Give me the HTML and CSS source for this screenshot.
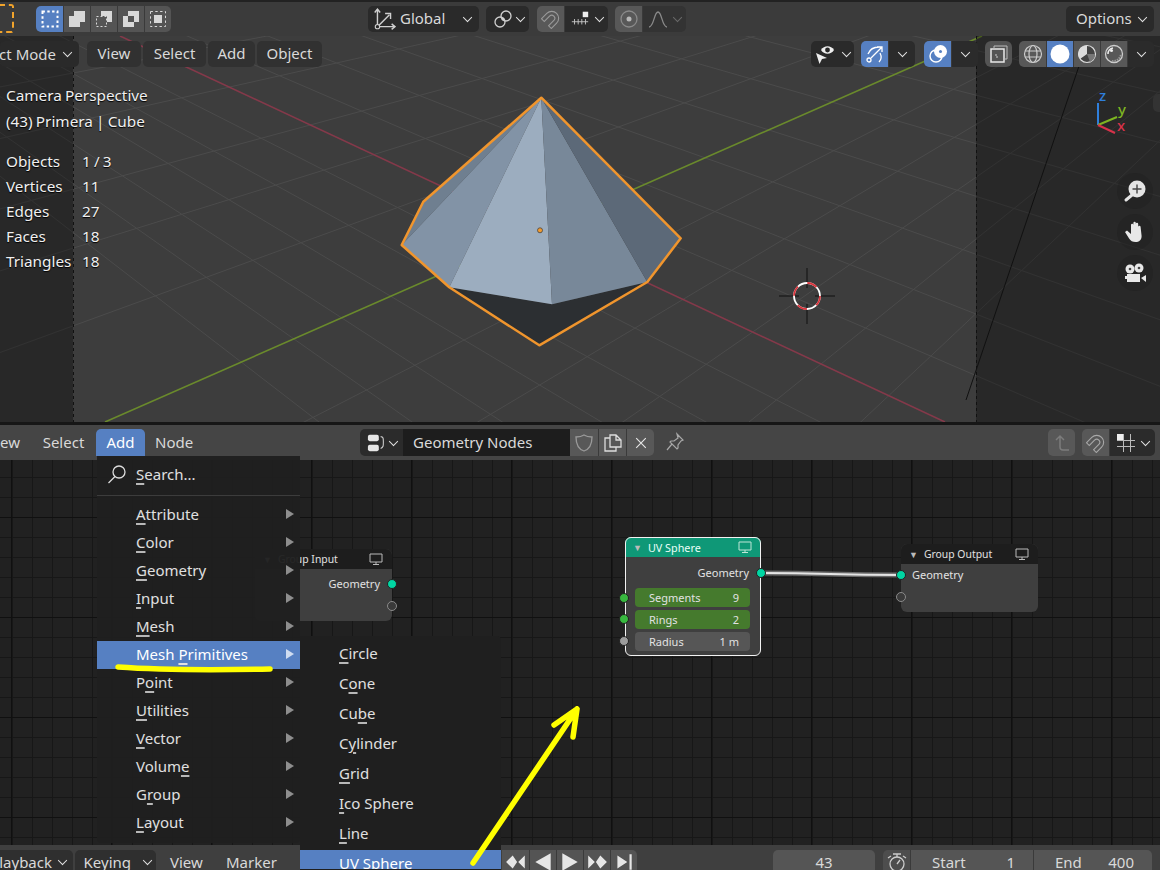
FILE: index.html
```html
<!DOCTYPE html>
<html lang="en">
<head>
<meta charset="utf-8">
<title>Blender Geometry Nodes</title>
<link rel="stylesheet" href="styles.css">
</head>
<body>
<div class="app">

  <header class="topbar">
    <div class="tool-icon"></div>
    <div class="btn-group modes">
      <div class="cell active"><svg viewBox="0 0 20 20" class="ic"><rect x="2.500" y="2.500" width="15" height="15" fill="none" stroke="#fff" stroke-width="2" stroke-dasharray="2.400 2.400"/></svg></div>
      <div class="cell"><svg viewBox="0 0 20 20" class="ic"><path d="M7 2h11v11h-5v5H2V7h5z" fill="#d8d8d8"/></svg></div>
      <div class="cell"><svg viewBox="0 0 20 20" class="ic"><path d="M7 2h11v11H7z" fill="#d8d8d8"/><path d="M2 7h11v11H2z" fill="#555"/><rect x="2.500" y="7.500" width="10" height="10" fill="none" stroke="#d8d8d8" stroke-dasharray="2 2"/></svg></div>
      <div class="cell"><svg viewBox="0 0 20 20" class="ic"><path d="M7 2h11v11h-5V7H7zM2 7h5v6h6v5H2z" fill="#d8d8d8"/></svg></div>
      <div class="cell"><svg viewBox="0 0 20 20" class="ic"><rect x="2.500" y="2.500" width="15" height="15" fill="none" stroke="#d8d8d8" stroke-dasharray="2.400 2.400"/><rect x="6" y="6" width="8" height="8" fill="#d8d8d8"/></svg></div>
    </div>
    <div class="pill global"><svg viewBox="0 0 22 22" class="ic wide"><path d="M5 2v16h16M5 18 16 7" fill="none" stroke="#d0d0d0" stroke-width="1.300"/><path d="M2.500 5 5 2l2.500 3M18 15.500l3 2.500-3 2.500M12 6h5v5" fill="none" stroke="#d0d0d0" stroke-width="1.300"/><circle cx="5" cy="18" r="2" fill="#282828" stroke="#d0d0d0"/></svg><span class="grow">Global</span><i class="chev"></i></div>
    <div class="pill pivot"><svg viewBox="0 0 20 20" class="ic"><circle cx="7" cy="13" r="5" fill="none" stroke="#d0d0d0" stroke-width="1.300"/><circle cx="13" cy="7" r="5" fill="none" stroke="#d0d0d0" stroke-width="1.300"/><circle cx="10" cy="10" r="1.500" fill="#d0d0d0"/></svg><i class="chev"></i></div>
    <div class="btn-group snap">
      <div class="cell grey"><svg viewBox="0 0 20 20" class="ic"><g transform="rotate(45 10 10)" fill="none"><path d="M5 17V9a5 5 0 0 1 10 0v8" stroke="#9a9a9a" stroke-width="5"/><path d="M5 16V9a5 5 0 0 1 10 0v7" stroke="#585858" stroke-width="2.800"/></g></svg></div>
      <div class="cell dark two"><svg viewBox="0 0 22 20" class="ic"><path d="M2 13h18M5 10v6M9 10v6M13 10v6M17 10v6" stroke="#c8c8c8" fill="none"/><rect x="14" y="2" width="6" height="6" fill="#eee"/></svg><i class="chev"></i></div>
    </div>
    <div class="btn-group prop">
      <div class="cell grey"><svg viewBox="0 0 20 20" class="ic"><circle cx="10" cy="10" r="8" fill="none" stroke="#8a8a8a" stroke-width="1.300"/><circle cx="10" cy="10" r="2.500" fill="#b8b8b8"/></svg></div>
      <div class="cell dim two"><svg viewBox="0 0 20 20" class="ic"><path d="M1 18C6 18 6 3 10 3s4 15 9 15" fill="none" stroke="#8a8a8a" stroke-width="1.300"/></svg><i class="chev faint"></i></div>
    </div>
    <div class="pill options"><span class="grow">Options</span><i class="chev"></i></div>
  </header>

  <section class="viewport">
    <svg class="scene" viewBox="0 36 1160 386" aria-hidden="true">
      <g class="gridlines">
        <path d="M-649-324 1200 55M-649-324 1200 102M-649-324 1200 153M-649-324 1200 208M-649-324 1200 268M-649-324 1200 334M-649-324 1200 402M-649-324 1200 472M-649-324 1200 615M-649-324 1200 694M-649-324 1200 779M-649-324 1200 874M-649-324 1200 976M-649-324 1200 1101"/>
        <path d="M1526-204-100 106M1526-204-100 161M1526-204-100 236M1526-204-100 302M1526-204-100 389M1526-204-100 629M1526-204-100 767M1526-204-100 923M1526-204-100 1106M1526-204-100 1326"/>
      </g>
      <path d="M120 36 945 422" class="axis-x"/>
      <path d="M105 422 982 36" class="axis-y"/>
      <rect x="0" y="36" width="73" height="386" class="region"/>
      <rect x="976" y="36" width="184" height="386" class="region"/>
      <path d="M73.500 36V422M976.500 36V422" class="dashed"/>
      <path d="M1079 66 966 400" class="frame"/>
      <path d="M449.300 287.300 552 304.300 647.300 282 539.300 345.300z" fill="#2c2f32"/>
      <path d="M541.300 97.700 423.300 201.700 401.700 245z" fill="#6f7f90"/>
      <path d="M541.300 97.700 401.700 245 449.300 287.300z" fill="#8293a6"/>
      <path d="M541.300 97.700 449.300 287.300 552 304.300z" fill="#9cadbf"/>
      <path d="M541.300 97.700 552 304.300 647.300 282z" fill="#788899"/>
      <path d="M541.300 97.700 647.300 282 680.700 238.300z" fill="#5c6978"/>
      <path d="M541.300 97.700 423.300 201.700 401.700 245 449.300 287.300 539.300 345.300 647.300 282 680.700 238.300z" class="outline"/>
      <circle cx="540" cy="230.300" r="2.500" fill="#f29a2e" stroke="#444" stroke-width=".8"/>
      <g class="cursor3d">
        <path d="M779 296H799M815 296H835M807 268V288M807 304V324" stroke="#111" fill="none"/>
        <circle cx="807" cy="296" r="13" fill="none" stroke="#fff" stroke-width="1.800"/>
        <circle cx="807" cy="296" r="13" fill="none" stroke="#d8343c" stroke-width="1.800" stroke-dasharray="10.200 10.200"/>
      </g>
      <g class="gizmo" stroke-width="2" fill="none">
        <path d="M1098 125V103" stroke="#2f7fdc"/>
        <path d="M1098 125 1117 117" stroke="#7eb521"/>
        <path d="M1098 125 1115 133" stroke="#d8324a"/>
      </g>
    </svg>

    <div class="vp-head">
      <div class="pill mode"><span>Object Mode</span><i class="chev"></i></div>
      <div class="menu-pills">
        <div class="mp view">View</div>
        <div class="mp select">Select</div>
        <div class="mp add">Add</div>
        <div class="mp object">Object</div>
      </div>
      <div class="pill eye"><svg viewBox="0 0 24 24" class="ic wide"><path d="M8 8c3-5 10-5 13 0-3 5-10 5-13 0z" fill="#eee"/><circle cx="14.500" cy="8" r="2.400" fill="#282828"/><path d="M3 11 14 16l-5 1-2.500 5z" fill="#eee"/></svg><i class="chev"></i></div>
      <div class="btn-group gizmo-btn">
        <div class="cell active"><svg viewBox="0 0 20 20" class="ic"><circle cx="4" cy="16" r="2" fill="none" stroke="#fff" stroke-width="1.300"/><path d="M6 14 17 3M3 10C5 5 9 3 14 3M12 3h5v5M15 9c2 4 1 7-1 9" fill="none" stroke="#fff" stroke-width="1.300"/></svg></div>
        <div class="cell dark narrow"><i class="chev"></i></div>
      </div>
      <div class="btn-group overlay-btn">
        <div class="cell active"><svg viewBox="0 0 20 20" class="ic"><circle cx="8" cy="12" r="6" fill="none" stroke="#fff" stroke-width="1.500"/><circle cx="12.500" cy="7.500" r="6.500" fill="#fff"/><circle cx="12.500" cy="7.500" r="1.500" fill="#5680c2"/></svg></div>
        <div class="cell dark narrow"><i class="chev"></i></div>
      </div>
      <div class="cell xray"><svg viewBox="0 0 20 20" class="ic"><rect x="2" y="5" width="13" height="13" fill="none" stroke="#e8e8e8" stroke-width="1.500"/><path d="M5 5V2h13v13h-3" fill="none" stroke="#bbb"/><path d="M7 10v3h3" fill="none" stroke="#ccc" stroke-dasharray="2 1"/></svg></div>
      <div class="btn-group shading">
        <div class="cell grey"><svg viewBox="0 0 20 20" class="ic"><circle cx="10" cy="10" r="8.500" fill="none" stroke="#ccc" stroke-width="1.200"/><ellipse cx="10" cy="10" rx="4" ry="8.500" fill="none" stroke="#ccc" stroke-width="1.200"/><path d="M2 7h16M2 13h16" stroke="#ccc" stroke-width="1.200"/></svg></div>
        <div class="cell active"><svg viewBox="0 0 20 20" class="ic"><circle cx="10" cy="10" r="9.500" fill="#fff"/></svg></div>
        <div class="cell grey"><svg viewBox="0 0 20 20" class="ic"><circle cx="10" cy="10" r="8.500" fill="#444" stroke="#ddd" stroke-width="1.200"/><path d="M10 1.500A8.500 8.500 0 0 0 3 15L10 10z" fill="#ddd"/><path d="M10 10 18 10A8.500 8.500 0 0 1 13 18z" fill="#777"/></svg></div>
        <div class="cell grey"><svg viewBox="0 0 20 20" class="ic"><circle cx="10" cy="10" r="8.500" fill="none" stroke="#ccc" stroke-width="1.300"/><path d="M4 10a6 6 0 0 1 5-6" fill="none" stroke="#eee" stroke-width="1.500"/><circle cx="7.500" cy="6.500" r="1.500" fill="#eee"/><path d="M8 17a8 8 0 0 0 9-7" fill="none" stroke="#999" stroke-width="2" stroke-dasharray="1.500 1"/></svg></div>
        <div class="cell dark narrow"><i class="chev"></i></div>
      </div>
    </div>

    <div class="info">
      <p>Camera Perspective</p>
      <p>(43) Primera | Cube</p>
      <dl class="stats">
        <dt>Objects</dt><dd>1 / 3</dd>
        <dt>Vertices</dt><dd>11</dd>
        <dt>Edges</dt><dd>27</dd>
        <dt>Faces</dt><dd>18</dd>
        <dt>Triangles</dt><dd>18</dd>
      </dl>
    </div>

    <div class="axis-labels">
      <span class="lbl-z">z</span><span class="lbl-y">y</span><span class="lbl-x">x</span>
    </div>
    <div class="side-tab"></div>
    <div class="nav-buttons">
      <div class="nav"><svg viewBox="0 0 24 24" class="ic nav-ic"><circle cx="14" cy="10" r="8.500" fill="#e4e4e4"/><path d="M3 21 9 16" stroke="#e4e4e4" stroke-width="3" stroke-linecap="round"/><path d="M14 5.500v9M9.500 10h9" stroke="#444" stroke-width="1.400"/></svg></div>
      <div class="nav"><svg viewBox="0 0 24 24" class="ic nav-ic"><path d="M2 12 4 10.500 8 14V5a1.200 1.200 0 0 1 2.400 0v5-7a1.200 1.200 0 0 1 2.400 0v7-6a1.200 1.200 0 0 1 2.400 0v7-4a1.200 1.200 0 0 1 2.400 0l1 9c0 4-2.500 6-6 6-3 0-5-1-6.500-3.500z" fill="#e8e8e8"/></svg></div>
      <div class="nav"><svg viewBox="0 0 24 24" class="ic nav-ic"><circle cx="7" cy="8" r="4.500" fill="#e8e8e8"/><circle cx="16" cy="7" r="4.500" fill="#e8e8e8"/><circle cx="7" cy="8" r="1.300" fill="#444"/><circle cx="16" cy="7" r="1.300" fill="#444"/><rect x="4" y="13" width="13" height="8" fill="#e8e8e8"/><path d="M18 17l5-3v7z" fill="#e8e8e8"/><path d="M2 15h2v3H2z" fill="#e8e8e8"/></svg></div>
    </div>
  </section>

  <div class="divider"></div>

  <header class="node-head">
    <div class="nh-item n-view"><span>View</span></div>
    <div class="nh-item n-select">Select</div>
    <div class="nh-item n-add">Add</div>
    <div class="nh-item n-node">Node</div>
    <div class="tree-picker">
      <div class="cell dark type"><svg viewBox="0 0 22 22" class="ic"><rect x="1" y="2" width="12" height="7" rx="2" fill="#e6e6e6"/><rect x="1" y="13" width="12" height="7" rx="2" fill="#e6e6e6"/><path d="M15 4c3 0 3 2 3 6s0 6-3 7" fill="none" stroke="#ccc" stroke-width="1.200"/></svg><i class="chev"></i></div>
      <div class="tree-name">Geometry Nodes</div>
      <div class="cell grey icon-cell"><svg viewBox="0 0 20 20" class="ic"><path d="M10 2C7 4 5 4 2 4c0 7 2 12 8 14 6-2 8-7 8-14-3 0-5 0-8-2z" fill="none" stroke="#9a9a9a" stroke-width="1.300"/></svg></div>
      <div class="cell grey icon-cell"><svg viewBox="0 0 20 20" class="ic"><path d="M7 5H2v13h11v-4M7 2v12h11V7l-5-5zM13 2v5h5" fill="none" stroke="#ddd" stroke-width="1.300"/></svg></div>
      <div class="cell grey icon-cell"><svg viewBox="0 0 20 20" class="ic small"><path d="M4 4l12 12M16 4 4 16" stroke="#e6e6e6" stroke-width="1.400"/></svg></div>
    </div>
    <svg viewBox="0 0 20 20" class="ic pin"><path d="M12 2l6 6-2 1-3 4v3l-1 1-7-7 1-1h3l4-3zM7 12 2 18" fill="none" stroke="#a8a8a8" stroke-width="1.200"/></svg>
    <div class="cell grey parent"><svg viewBox="0 0 20 20" class="ic"><path d="M4 7 8 3l4 4M8 3v11c0 2 1 3 3 3h6" fill="none" stroke="#7c7c7c" stroke-width="1.500"/></svg></div>
    <div class="btn-group node-snap">
      <div class="cell grey"><svg viewBox="0 0 20 20" class="ic"><g transform="rotate(45 10 10)" fill="none"><path d="M5 17V9a5 5 0 0 1 10 0v8" stroke="#a8a8a8" stroke-width="5"/><path d="M5 16V9a5 5 0 0 1 10 0v7" stroke="#585858" stroke-width="2.800"/></g></svg></div>
      <div class="cell dark two"><svg viewBox="0 0 20 20" class="ic"><path d="M1 13.500h18M1 7.500h18M7.500 1v18M14.500 1v18" stroke="#bbb" fill="none"/><rect x="1" y="1" width="6" height="6" fill="#eee"/></svg><i class="chev"></i></div>
    </div>
  </header>

  <section class="node-canvas">
    <svg class="wire" viewBox="0 0 1160 386" aria-hidden="true"><path d="M761 113C830 113 830 115 901 115" stroke="#6a6a6a" stroke-width="5" fill="none"/><path d="M761 113C830 113 830 115 901 115" stroke="#e4e4e4" stroke-width="2" fill="none"/></svg>

    <div class="node n-input">
      <div class="node-title"><span class="tri">▼</span><span class="grow">Group Input</span><svg viewBox="0 0 14 14" class="mon"><path d="M1 2h12v8H1zM7 10v2M4 12.500h6" fill="none" stroke="#bbb"/></svg></div>
      <div class="node-row right">Geometry</div>
      <i class="sock teal s-in1"></i><i class="sock hollow s-in2"></i>
    </div>

    <div class="node n-sphere">
      <div class="node-title"><span class="tri">▼</span><span class="grow">UV Sphere</span><svg viewBox="0 0 14 14" class="mon"><path d="M1 2h12v8H1zM7 10v2M4 12.500h6" fill="none" stroke="#bfe5d8"/></svg></div>
      <div class="node-row right">Geometry</div>
      <div class="field green"><span>Segments</span><span>9</span></div>
      <div class="field green"><span>Rings</span><span>2</span></div>
      <div class="field"><span>Radius</span><span>1 m</span></div>
      <i class="sock teal s-out"></i><i class="sock lime s-a"></i><i class="sock lime s-b"></i><i class="sock gray s-c"></i>
    </div>

    <div class="node n-output">
      <div class="node-title"><span class="tri">▼</span><span class="grow">Group Output</span><svg viewBox="0 0 14 14" class="mon"><path d="M1 2h12v8H1zM7 10v2M4 12.500h6" fill="none" stroke="#bbb"/></svg></div>
      <div class="node-row">Geometry</div>
      <i class="sock teal s-o1"></i><i class="sock hollow s-o2"></i>
    </div>

    <nav class="menu main-menu">
      <div class="m-search"><svg viewBox="0 0 20 20" class="ic search"><circle cx="12" cy="8" r="6" fill="none" stroke="#ddd" stroke-width="1.300"/><path d="M8 12.500 1.500 19" stroke="#ddd" stroke-width="1.300"/></svg><span><u>S</u>earch...</span></div>
      <div class="m-sep"></div>
      <div class="m-row"><span><u>A</u>ttribute</span><i class="arrow"></i></div>
      <div class="m-row"><span><u>C</u>olor</span><i class="arrow"></i></div>
      <div class="m-row"><span><u>G</u>eometry</span><i class="arrow"></i></div>
      <div class="m-row"><span><u>I</u>nput</span><i class="arrow"></i></div>
      <div class="m-row"><span><u>M</u>esh</span><i class="arrow"></i></div>
      <div class="m-row hot"><span>Mesh <u>P</u>rimitives</span><i class="arrow"></i></div>
      <div class="m-row"><span>P<u>o</u>int</span><i class="arrow"></i></div>
      <div class="m-row"><span><u>U</u>tilities</span><i class="arrow"></i></div>
      <div class="m-row"><span><u>V</u>ector</span><i class="arrow"></i></div>
      <div class="m-row"><span>Volum<u>e</u></span><i class="arrow"></i></div>
      <div class="m-row"><span>G<u>r</u>oup</span><i class="arrow"></i></div>
      <div class="m-row"><span><u>L</u>ayout</span><i class="arrow"></i></div>
    </nav>

    <nav class="menu sub-menu">
      <div class="s-row"><span><u>C</u>ircle</span></div>
      <div class="s-row"><span>C<u>o</u>ne</span></div>
      <div class="s-row"><span>Cu<u>b</u>e</span></div>
      <div class="s-row"><span>C<u>y</u>linder</span></div>
      <div class="s-row"><span><u>G</u>rid</span></div>
      <div class="s-row"><span><u>I</u>co Sphere</span></div>
      <div class="s-row"><span><u>L</u>ine</span></div>
      <div class="s-row hot"><span>UV Sphere</span></div>
    </nav>
  </section>

  <footer class="timeline">
    <div class="tl-drop playback"><span>Playback</span><i class="chev"></i></div>
    <div class="tl-drop keying"><span>Keying</span><i class="chev"></i></div>
    <div class="tl-text t-view">View</div>
    <div class="tl-text t-marker">Marker</div>
    <div class="transport">
      <div class="tc"><svg viewBox="0 0 20 16" class="t-ic"><path d="M1 8l6-6 4 6-4 6zM18 2v12l-6-6z" fill="#e6e6e6"/></svg></div>
      <div class="tc"><svg viewBox="0 0 20 16" class="t-ic"><path d="M17 0v16L3 8z" fill="#e6e6e6"/></svg></div>
      <div class="tc"><svg viewBox="0 0 20 16" class="t-ic"><path d="M3 0v16L17 8z" fill="#e6e6e6"/></svg></div>
      <div class="tc"><svg viewBox="0 0 20 16" class="t-ic"><path d="M2 2v12l6-6zM13 2l6 6-6 6-4-6z" fill="#e6e6e6"/></svg></div>
      <div class="tc"><svg viewBox="0 0 20 16" class="t-ic"><path d="M4 2v12l9-6zM15 1h2v14h-2z" fill="#e6e6e6"/></svg></div>
    </div>
    <div class="tl-field current">43</div>
    <div class="range">
      <div class="timer"><svg viewBox="0 0 20 20" class="ic"><circle cx="10" cy="12" r="7" fill="none" stroke="#ccc" stroke-width="1.300"/><path d="M6 2h8M10 2v3M10 12l3-4M1 6l3-2M19 6l-3-2" stroke="#ccc" stroke-width="1.300" fill="none"/></svg></div>
      <div class="r-cell start"><span>Start</span><span>1</span></div>
      <div class="r-cell end"><span>End</span><span>400</span></div>
    </div>
  </footer>

  <svg class="annot" viewBox="0 0 1160 870" aria-hidden="true">
    <path d="M118 667C160 670 220 670 270 669" class="ann thin"/>
    <path d="M473 863 577 709M554 725 577 709 573 737" class="ann"/>
  </svg>
</div>
</body>
</html>
```
FILE: styles.css
```css
* { box-sizing: border-box; }
html, body { margin: 0; padding: 0; background: #222; }
body { width: 1160px; height: 870px; overflow: hidden; }
.app {
  position: relative; width: 1160px; height: 870px; overflow: hidden;
  display: flex; flex-direction: column;
  font-family: "Noto Sans", "Open Sans", sans-serif; font-size: 15px; color: #d9d9d9;
}
p, dl, dd, dt { margin: 0; }
.grow { flex: 1; }
.ic { width: 20px; height: 20px; display: block; flex: none; }
.ic.wide { width: 24px; height: 24px; }
.ic.small { width: 16px; height: 16px; }
.chev {
  display: block; flex: none; width: 7px; height: 7px; margin-top: -3px;
  border-right: 1.5px solid #e4e4e4; border-bottom: 1.5px solid #e4e4e4;
  transform: rotate(45deg) scale(.95);
}
.chev.faint { border-color: #6a6a6a; }

/* shared buttons */
.btn-group { display: flex; height: 26px; border-radius: 5px; overflow: hidden; flex: none; }
.cell { height: 100%; width: 27px; flex: none; display: flex; align-items: center; justify-content: center; background: #545454; }
.cell + .cell { border-left: 1px solid #3a3a3a; }
.cell.active { background: #5680c2; }
.cell.grey { background: #585858; }
.cell.dark { background: #2b2b2b; }
.cell.dim { background: #333; }
.cell.two { gap: 6px; width: 44px; }
.cell.narrow { width: 27px; }
.pill {
  height: 26px; background: #2a2a2a; border-radius: 5px; flex: none;
  display: flex; align-items: center; padding: 0 8px 1px;
}

/* top bar */
.topbar {
  height: 36px; flex: none; background: #3b3b3b; border-top: 2px solid #222;
  display: flex; align-items: flex-start; padding-top: 4px; position: relative;
}
.topbar .pill span { margin-top: -2px; }
.tool-icon {
  width: 15px; height: 29px; margin-top: -2px; margin-left: -1px; flex: none;
  border: 2px dashed #f0a32c; border-left: 0; border-radius: 0 3px 3px 0;
}
.modes { margin-left: 22px; }
.global { width: 111px; margin-left: 197px; gap: 4px; padding-left: 4px; }
.pivot { width: 43px; margin-left: 7px; gap: 4px; padding: 0 6px 0 7px; }
.snap { margin-left: 8px; width: 71px; }
.prop { margin-left: 7px; }
.options { width: 88px; margin-left: auto; margin-right: 6px; padding-left: 10px; }

/* 3D viewport */
.viewport { height: 386px; flex: none; position: relative; background: #3d3d3d; overflow: hidden; }
.scene { position: absolute; inset: 0; width: 100%; height: 100%; display: block; }
.gridlines path { stroke: #4b4b4b; stroke-width: 1; fill: none; }
.axis-x { stroke: #84394a; stroke-width: 1.6; fill: none; }
.axis-y { stroke: #6a8a2c; stroke-width: 1.6; fill: none; }
.region { fill: rgba(0, 0, 0, .33); }
.dashed { stroke: #111; stroke-width: 1; stroke-dasharray: 3 3; fill: none; }
.frame { stroke: #111; stroke-width: 1; fill: none; }
.outline { fill: none; stroke: #f0952d; stroke-width: 2.5; stroke-linejoin: round; }

.vp-head { position: absolute; left: 0; right: 6px; top: 5px; height: 26px; display: flex; }
.mode { width: 79px; justify-content: flex-end; gap: 8px; white-space: nowrap; padding-right: 8px; }
.menu-pills { display: flex; gap: 2px; margin-left: 8px; }
.mp { height: 26px; background: #313131; border-radius: 5px; text-align: center; line-height: 24px; }
.mp.view { width: 54px; }
.mp.select { width: 63px; }
.mp.add { width: 47px; }
.mp.object { width: 65px; }
.eye { width: 43px; margin-left: auto; padding: 0 5px 0 2px; gap: 6px; }
.gizmo-btn { margin-left: 7px; }
.overlay-btn { margin-left: 9px; }
.xray { margin-left: 7px; border-radius: 6px; }
.shading { margin-left: 7px; }

.info { position: absolute; left: 6px; top: 46px; text-shadow: 0 1px 1px #000; color: #f0f0f0; font-size: 15.3px; word-spacing: -.8px; }
.info p { height: 26px; line-height: 26px; white-space: nowrap; }
.stats { margin-top: 15px; display: grid; grid-template-columns: 76px auto; grid-auto-rows: 25px; line-height: 25px; }

.axis-labels span { position: absolute; font-size: 15px; line-height: 13px; font-weight: 500; }
.lbl-z { left: 1099px; top: 53px; color: #2f7fdc; }
.lbl-y { left: 1118px; top: 67px; color: #7eb521; }
.lbl-x { left: 1117px; top: 83px; color: #d8324a; }
.side-tab { position: absolute; right: 0; top: 58px; width: 7px; height: 18px; background: #333; border-radius: 5px 0 0 5px; }
.nav-buttons { position: absolute; left: 1117px; top: 137px; display: flex; flex-direction: column; gap: 5px; }
.nav { width: 36px; height: 36px; border-radius: 50%; background: rgba(30, 30, 30, .35); display: flex; align-items: center; justify-content: center; }
.nav-ic { width: 24px; height: 24px; }

.divider { height: 3px; flex: none; background: #161616; }

/* node editor header */
.node-head { height: 35px; flex: none; background: #454545; display: flex; align-items: flex-start; padding-top: 4px; position: relative; }
.nh-item { height: 27px; line-height: 27px; flex: none; text-align: center; }
.n-view { width: 20px; display: flex; justify-content: flex-end; white-space: nowrap; }
.n-select { margin-left: 21px; width: 45px; }
.n-add { margin-left: 10px; width: 49px; background: #5680c2; color: #fff; border-radius: 5px 5px 0 0; }
.n-node { margin-left: 10px; width: 38px; }
.tree-picker { display: flex; height: 27px; margin-left: 167px; border-radius: 5px; overflow: hidden; flex: none; }
.type { width: 43px; gap: 3px; justify-content: center; }
.tree-name { width: 167px; background: #1d1d1d; padding-left: 10px; line-height: 27px; }
.icon-cell { width: 28px; }
.pin { margin: 3px 0 0 11px; }
.parent { width: 27px; height: 27px; margin-left: auto; border-radius: 5px; }
.node-snap { height: 27px; margin-left: 7px; margin-right: 5px; }
.node-snap .two { width: 46px; }

/* node canvas */
.node-canvas {
  height: 385px; flex: none; position: relative;
  background-color: #212121;
  background-image:
    linear-gradient(#101010 1px, transparent 1px),
    linear-gradient(90deg, #101010 1px, transparent 1px),
    linear-gradient(#171717 1px, transparent 1px),
    linear-gradient(90deg, #171717 1px, transparent 1px);
  background-size: 100px 100px, 100px 100px, 20px 20px, 20px 20px;
  background-position: 0 57px, 11px 0, 0 17px, 12px 0;
}
.wire { position: absolute; inset: 0; width: 1160px; height: 386px; }
.node { position: absolute; background: #3f3f3f; border-radius: 6px; font-size: 11px; color: #e2e2e2; }
.node-title { height: 20px; background: #1d1d1d; border-radius: 6px 6px 0 0; display: flex; align-items: center; padding: 0 9px 0 8px; gap: 6px; font-size: 10.4px; }
.tri { font-size: 9px; color: #bbb; }
.mon { width: 14px; height: 14px; }
.node-row { height: 19px; line-height: 19px; margin-top: 5px; padding: 0 12px 0 11px; }
.node-row.right { text-align: right; }
.n-input { left: 255px; top: 89px; width: 137px; height: 72px; }
.n-sphere { left: 625px; top: 77px; width: 136px; height: 119px; outline: 1px solid #f2f2f2; outline-offset: -1px; }
.n-sphere .node-title { background: #0f9877; color: #eafff8; font-size: 10.8px; }
.n-sphere .node-row { margin-top: 6px; margin-bottom: 6px; }
.n-output { left: 901px; top: 84px; width: 137px; height: 68px; }
.n-output .node-row { margin-top: 1px; }
.field { margin: 3px 11px 0 10px; height: 19px; border-radius: 4px; background: #565656; display: flex; justify-content: space-between; align-items: center; padding: 0 11px 0 14px; }
.field.green { background: #457a2d; }
.sock { position: absolute; width: 10px; height: 10px; border-radius: 50%; border: 1px solid #222; display: block; }
.sock.teal { background: #00d6a3; }
.sock.lime { background: #38b83f; }
.sock.gray { background: #9c9c9c; }
.sock.hollow { background: #3a3a3a; border-color: #8a8a8a; }
.s-in1 { right: -5px; top: 30px; }
.s-in2 { right: -5px; top: 52px; }
.s-out { right: -5px; top: 31px; }
.s-a { left: -6px; top: 56px; }
.s-b { left: -6px; top: 77px; }
.s-c { left: -6px; top: 99px; }
.s-o1 { left: -5px; top: 26px; }
.s-o2 { left: -5px; top: 48px; }

.menu { position: absolute; z-index: 5; background: rgba(31, 31, 31, .96); color: #e0e0e0; }
.menu u { text-decoration-thickness: 1.5px; text-underline-offset: 3px; text-decoration-color: #b8b8b8; }
.main-menu { left: 97px; top: -4px; width: 203px; height: 387px; border-radius: 0 0 4px 4px; display: flex; flex-direction: column; }
.m-search { height: 39px; flex: none; display: flex; align-items: center; padding: 0 0 3px 10px; gap: 9px; }
.search { width: 20px; height: 20px; }
.m-sep { height: 1px; flex: none; background: #3c3c3c; margin-bottom: 5px; }
.m-row { height: 28px; flex: none; display: flex; align-items: center; justify-content: space-between; padding: 0 6px 2px 39px; }
.hot { background: #5680c2; color: #fff; }
.hot u { text-decoration-color: #e0e0e0; }
.arrow { width: 0; height: 0; border-left: 8px solid #8e8e8e; border-top: 5px solid transparent; border-bottom: 5px solid transparent; }
.hot .arrow { border-left-color: #cfdcf0; }
.sub-menu { left: 300px; top: 176px; width: 201px; height: 234px; padding-top: 3px; border-radius: 0 4px 0 0; background: #1f1f1f; overflow: hidden; }
.s-row { height: 30px; display: flex; align-items: center; padding: 0 0 2px 39px; }
.s-row.hot { height: 19px; padding: 3px 0 0 39px; overflow: hidden; align-items: flex-start; line-height: 20px; margin-top: 1px; }

/* timeline */
.timeline { height: 25px; flex: none; background: #3f3f3f; display: flex; align-items: flex-start; padding-top: 5px; position: relative; }
.tl-drop { height: 24px; background: #2f2f2f; display: flex; align-items: center; justify-content: flex-end; gap: 7px; white-space: nowrap; padding-right: 7px; flex: none; border-radius: 0 5px 0 0; }
.playback { width: 73px; }
.keying { width: 81px; margin-left: 2px; border-radius: 5px 5px 0 0; gap: 13px; padding-right: 5px; }
.tl-text { height: 24px; line-height: 24px; flex: none; }
.t-view { margin-left: 14px; width: 56px; }
.t-marker { width: 60px; }
.transport { margin-left: 216px; display: flex; height: 24px; border-radius: 0 5px 0 0; overflow: hidden; flex: none; }
.tc { width: 27px; height: 100%; background: #545454; display: flex; align-items: center; justify-content: center; }
.tc + .tc { border-left: 1px solid #3a3a3a; }
.t-ic { width: 22px; height: 18px; display: block; }
.tl-field { height: 24px; background: #555; border-radius: 5px 5px 0 0; text-align: center; line-height: 24px; flex: none; }
.current { width: 102px; margin-left: 136px; }
.range { display: flex; height: 24px; margin-left: 8px; border-radius: 5px 5px 0 0; overflow: hidden; flex: none; }
.timer { width: 27px; background: #4d4d4d; display: flex; justify-content: center; align-items: flex-start; padding-top: 2px; }
.r-cell { height: 100%; background: #555; display: flex; justify-content: space-between; align-items: center; border-left: 1px solid #3a3a3a; }
.start { width: 123px; padding: 0 18px 0 21px; }
.end { width: 119px; padding: 0 18px 0 21px; }

.annot { position: absolute; inset: 0; z-index: 6; width: 1160px; height: 870px; pointer-events: none; }
.ann { fill: none; stroke: #ffff00; stroke-width: 5.5; stroke-linecap: round; stroke-linejoin: round; }
.ann.thin { stroke-width: 5.5; }
```
